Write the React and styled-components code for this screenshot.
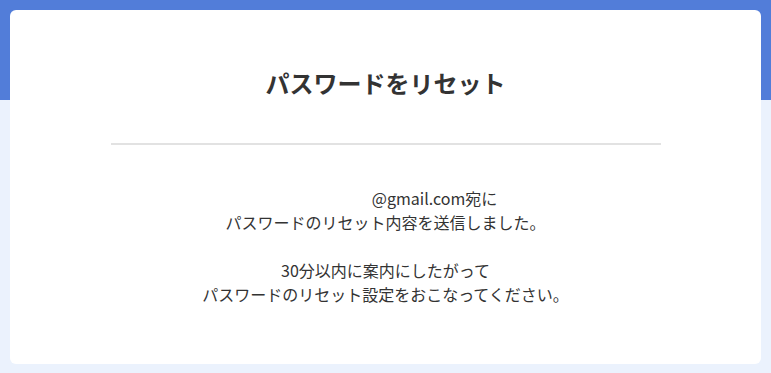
import styled, { createGlobalStyle } from "styled-components"

const GlobalStyle = createGlobalStyle`
    html, body {
        margin: 0;
        padding: 0;
    }
    body {
        background: linear-gradient(to bottom, #527dd9 0, #527dd9 100px, #ebf2fd 100px, #ebf2fd 100%);
        min-height: 100vh;
        font-family: 'Noto Sans CJK JP', 'Noto Sans', sans-serif;
        color: #333333;
    }
`

export default function App(){
    return(
        <>
            <GlobalStyle />
            <Page>
                <Card>
                    <Header>
                        <h1>パスワードをリセット</h1>
                    </Header>
                    <Message>
                        <p>
                            <Hidden />@gmail.com宛に<br />
                            パスワードのリセット内容を送信しました。
                        </p>
                        <p>
                            30分以内に案内にしたがって<br />
                            パスワードのリセット設定をおこなってください。
                        </p>
                    </Message>
                </Card>
            </Page>
        </>
    )
}

const Page = styled.div`
    padding: 10px;
    box-sizing: border-box;
`

const Card = styled.div`
    background: #ffffff;
    border-radius: 6px;
    height: 354px;
    box-sizing: border-box;
    padding-top: 57px;
    display: flex;
    flex-direction: column;
    align-items: center;
`

const Header = styled.div`
    width: 550px;
    border-bottom: 2px solid #e2e2e2;
    padding-bottom: 44px;
    text-align: center;

    h1 {
        margin: 0;
        font-size: 24px;
        font-weight: 700;
        line-height: 32px;
        color: #333333;
    }
`

const Message = styled.div`
    margin-top: 41px;
    text-align: center;
    font-size: 16px;
    line-height: 24px;
    color: #333333;

    p {
        margin: 0 0 24px 0;
    }
`

const Hidden = styled.span`
    display: inline-block;
    width: 98px;
`
